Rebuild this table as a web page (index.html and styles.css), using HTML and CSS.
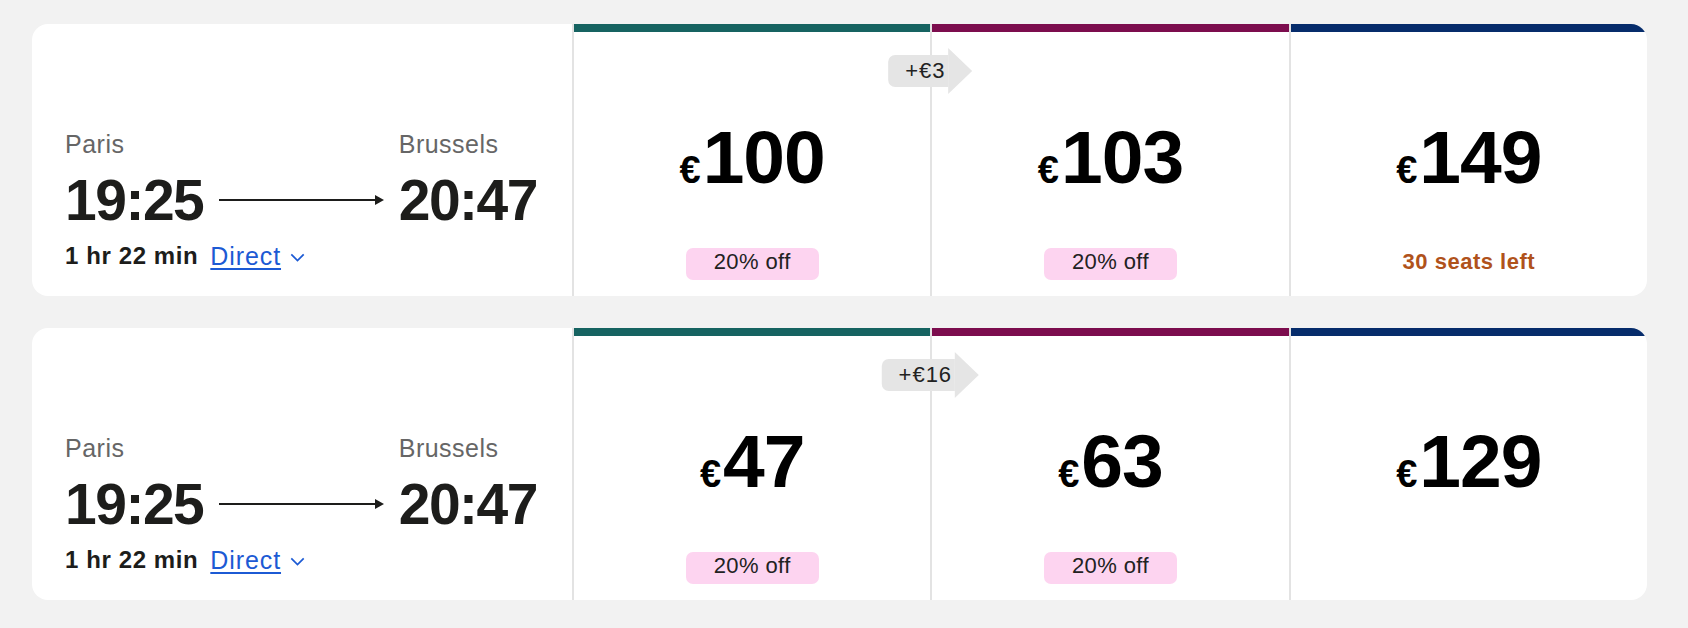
FILE: index.html
```html
<!DOCTYPE html>
<html lang="en">
<head>
    <meta charset="UTF-8">
    <meta name="viewport" content="width=device-width, initial-scale=1.0">
    <title>Paris to Brussels</title>
    <link rel="stylesheet" href="styles.css">
</head>
<body>
    <div class="results">

        <div class="journey">
            <div class="route">
                <div class="stops">
                    <div class="city">Paris</div>
                    <div class="city city-end">Brussels</div>
                    <div class="time">19:25</div>
                    <div class="arrow"><span class="arrow-line"></span><span class="arrow-head"></span></div>
                    <div class="time">20:47</div>
                </div>
                <div class="meta">
                    <span class="duration">1 hr 22 min</span>
                    <a class="direct" href="#">Direct</a>
                    <svg class="chevron" width="15" height="9" viewBox="0 0 15 9"><path d="M1.3 1.3l6.2 6.2 6.2-6.2" fill="none" stroke="#1c5ad4" stroke-width="1.7"/></svg>
                </div>
            </div>
            <div class="fare fare-standard">
                <div class="fare-bar"></div>
                <div class="price"><span class="cur">€</span>100</div>
                <div class="fare-foot"><span class="discount">20% off</span></div>
                <div class="upgrade"><span class="upgrade-label">+€3</span><span class="upgrade-tip"></span></div>
            </div>
            <div class="fare fare-plus">
                <div class="fare-bar"></div>
                <div class="price"><span class="cur">€</span>103</div>
                <div class="fare-foot"><span class="discount">20% off</span></div>
            </div>
            <div class="fare fare-premier">
                <div class="fare-bar"></div>
                <div class="price"><span class="cur">€</span>149</div>
                <div class="fare-foot"><span class="seats">30 seats left</span></div>
            </div>
        </div>

        <div class="journey">
            <div class="route">
                <div class="stops">
                    <div class="city">Paris</div>
                    <div class="city city-end">Brussels</div>
                    <div class="time">19:25</div>
                    <div class="arrow"><span class="arrow-line"></span><span class="arrow-head"></span></div>
                    <div class="time">20:47</div>
                </div>
                <div class="meta">
                    <span class="duration">1 hr 22 min</span>
                    <a class="direct" href="#">Direct</a>
                    <svg class="chevron" width="15" height="9" viewBox="0 0 15 9"><path d="M1.3 1.3l6.2 6.2 6.2-6.2" fill="none" stroke="#1c5ad4" stroke-width="1.7"/></svg>
                </div>
            </div>
            <div class="fare fare-standard">
                <div class="fare-bar"></div>
                <div class="price"><span class="cur">€</span>47</div>
                <div class="fare-foot"><span class="discount">20% off</span></div>
                <div class="upgrade"><span class="upgrade-label">+€16</span><span class="upgrade-tip"></span></div>
            </div>
            <div class="fare fare-plus">
                <div class="fare-bar"></div>
                <div class="price"><span class="cur">€</span>63</div>
                <div class="fare-foot"><span class="discount">20% off</span></div>
            </div>
            <div class="fare fare-premier">
                <div class="fare-bar"></div>
                <div class="price"><span class="cur">€</span>129</div>
                <div class="fare-foot"></div>
            </div>
        </div>

    </div>
</body>
</html>
```

FILE: styles.css
```css
body {
    margin: 0;
    background: #f2f2f2;
    font-family: "Liberation Sans", Arial, sans-serif;
    color: #1b1b1b;
}
.results {
    display: flex;
    flex-direction: column;
    gap: 32px;
    padding: 24px 41px 28px 32px;
}
.journey {
    display: grid;
    grid-template-columns: 540px repeat(3, 1fr);
    height: 272px;
    background: white;
    border-radius: 16px;
    overflow: hidden;
}

/* departure / arrival side */
.route {
    display: flex;
    flex-direction: column;
    justify-content: flex-end;
    padding: 0 35px 26px 33px;
}
.stops {
    display: grid;
    grid-template-columns: auto 1fr auto;
    grid-template-rows: 30px 62px;
    row-gap: 10px;
}
.city {
    font-size: 25px;
    line-height: 30px;
    letter-spacing: 0.5px;
    color: #666;
    grid-column: 1;
}
.city-end { grid-column: 3; }
.time {
    font-size: 57px;
    line-height: 62px;
    font-weight: bold;
    letter-spacing: -1.5px;
    color: #1d1d1b;
}
.arrow {
    display: flex;
    align-items: center;
    padding: 0 15px 0 16px;
}
.arrow-line {
    flex: 1;
    height: 2px;
    background: #1d1d1b;
}
.arrow-head {
    width: 0;
    height: 0;
    border-left: 9px solid #1d1d1b;
    border-top: 5px solid transparent;
    border-bottom: 5px solid transparent;
}
.meta {
    display: flex;
    align-items: center;
    margin-top: 11px;
    height: 28px;
}
.duration {
    font-size: 24px;
    font-weight: bold;
    letter-spacing: 0.6px;
    color: #1d1d1b;
}
.direct {
    margin-left: 12px;
    font-size: 25px;
    letter-spacing: 0.9px;
    color: #1c5ad4;
    text-decoration: underline;
    text-underline-offset: 3px;
    text-decoration-thickness: 1.5px;
}
.chevron { margin: 2px 0 0 9px; }

/* fare columns */
.fare {
    position: relative;
    display: flex;
    flex-direction: column;
    align-items: center;
    border-left: 2px solid #e3e3e3;
}
.fare-bar {
    align-self: stretch;
    height: 8px;
}
.fare-standard .fare-bar { background: #166361; }
.fare-plus .fare-bar { background: #7c0d4e; }
.fare-premier .fare-bar { background: #062c6b; }
.price {
    margin-top: 85px;
    height: 80px;
    font-size: 75px;
    line-height: 80px;
    font-weight: bold;
    letter-spacing: -1px;
    color: #000;
}
.cur {
    font-size: 38px;
    line-height: 1;
    margin-right: 2px;
    letter-spacing: 0;
}
.fare-foot {
    margin-top: 51px;
    height: 32px;
}
.discount {
    display: inline-block;
    height: 32px;
    box-sizing: border-box;
    padding: 0 28px 4px;
    line-height: 28px;
    font-size: 22px;
    letter-spacing: 0.4px;
    color: #222;
    background: #fdd4f0;
    border-radius: 7px;
}
.seats {
    display: inline-block;
    line-height: 28px;
    font-size: 22px;
    font-weight: bold;
    letter-spacing: 0.5px;
    color: #b0521b;
}

/* price step badge between two fares */
.upgrade {
    position: absolute;
    top: 24px;
    right: 0;
    transform: translateX(50%);
    display: flex;
    align-items: center;
    z-index: 1;
}
.upgrade-label {
    height: 32px;
    line-height: 32px;
    padding: 0 3px 0 17px;
    font-size: 22px;
    letter-spacing: 1px;
    color: #222;
    background: #e5e5e5;
    border-radius: 7px 0 0 7px;
}
.upgrade-tip {
    width: 0;
    height: 0;
    border-left: 24px solid #e5e5e5;
    border-top: 23.5px solid transparent;
    border-bottom: 23.5px solid transparent;
}
```
